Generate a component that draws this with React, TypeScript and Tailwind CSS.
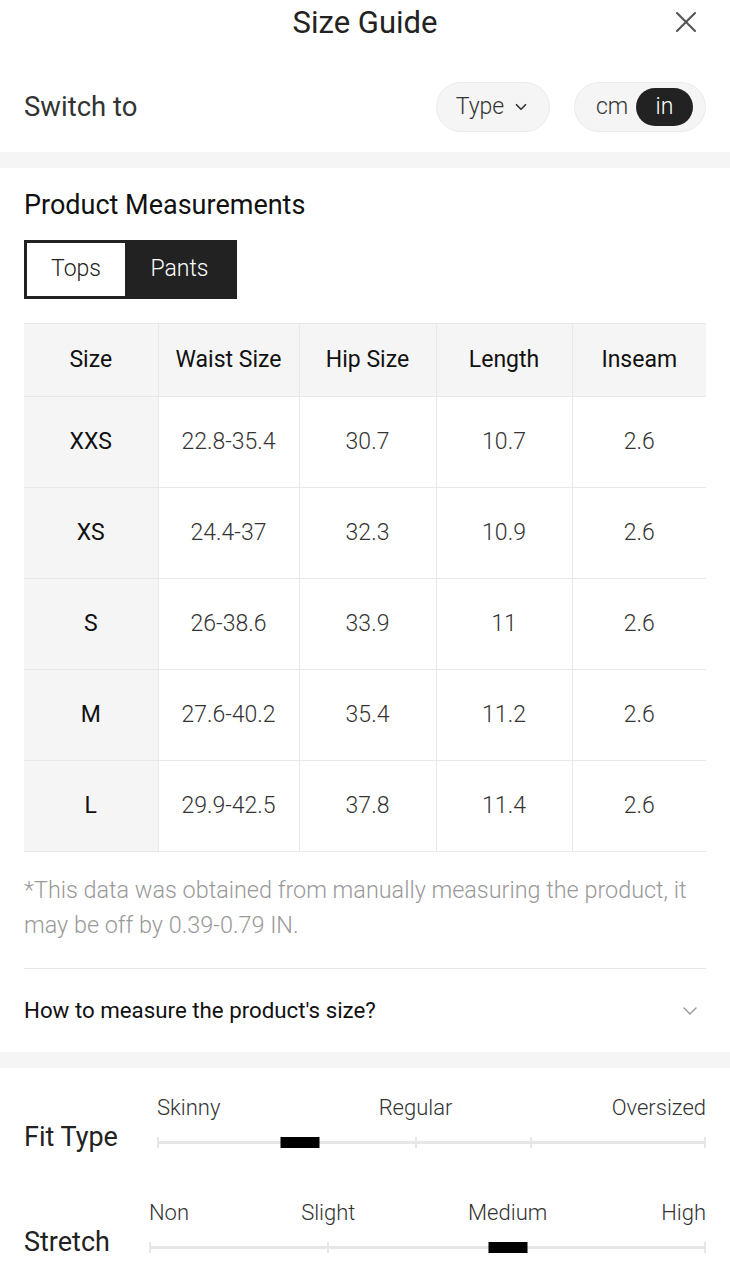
import { X, ChevronDown } from "lucide-react";

const rows = [
  ["XXS", "22.8-35.4", "30.7", "10.7", "2.6"],
  ["XS", "24.4-37", "32.3", "10.9", "2.6"],
  ["S", "26-38.6", "33.9", "11", "2.6"],
  ["M", "27.6-40.2", "35.4", "11.2", "2.6"],
  ["L", "29.9-42.5", "37.8", "11.4", "2.6"],
];

const headers = ["Size", "Waist Size", "Hip Size", "Length", "Inseam"];
const colWidths = ["w-[134px]", "w-[141px]", "w-[137px]", "w-[136px]", "w-[134px]"];

interface ScaleLabel {
  text: string;
  pos: number;
  align: "left" | "center" | "right";
}

interface ScaleProps {
  title: string;
  labels: ScaleLabel[];
  ticks: number[];
  thumb: number;
}

function Scale({ title, labels, ticks, thumb }: ScaleProps) {
  return (
    <div className="flex items-end gap-[39px]">
      <div className="text-[27px] leading-[27px] text-[#222] mb-[3px]">{title}</div>
      <div className="relative flex-1 h-[60px]">
        {/* labels */}
        {labels.map((l) => (
          <span
            key={l.text}
            className={
              "absolute top-0 text-[22px] leading-[28px] font-light text-[#333] whitespace-nowrap " +
              (l.align === "left" ? "" : l.align === "center" ? "-translate-x-1/2" : "-translate-x-full")
            }
            style={{ left: `${l.pos}%` }}
          >
            {l.text}
          </span>
        ))}
        {/* track */}
        <div className="absolute left-0 right-0 top-[47px] h-[3px] bg-[#e6e6e6]" />
        {ticks.map((t) => (
          <div
            key={t}
            className="absolute top-[43px] h-[11px] w-[2px] bg-[#e6e6e6] -translate-x-1/2"
            style={{ left: `${t}%` }}
          />
        ))}
        <div
          className="absolute top-[43px] h-[11px] w-[39px] bg-black -translate-x-1/2"
          style={{ left: `${thumb}%` }}
        />
      </div>
    </div>
  );
}

export default function App() {
  return (
    <div className="w-[730px] h-[1280px] bg-white overflow-hidden font-['Roboto',sans-serif] text-[#222]">
      {/* Header */}
      <div className="grid grid-cols-[1fr_auto_1fr] items-center h-[44px]">
        <div />
        <h1 className="text-[31px] leading-none text-[#222]">Size Guide</h1>
        <div className="flex justify-end pr-[26px]">
          <X className="w-[36px] h-[36px] text-[#555]" strokeWidth={1.4} />
        </div>
      </div>

      {/* Switch row */}
      <div className="flex items-center justify-between px-6 pt-[38px] pb-[20px]">
        <span className="text-[27.5px] leading-none text-[#333]">Switch to</span>
        <div className="flex items-center gap-6">
          <div className="flex items-center justify-center gap-[8px] w-[114px] h-[50px] rounded-full bg-[#f5f5f5] border border-[#ebebeb] text-[23px] font-light text-[#333]">
            <span>Type</span>
            <ChevronDown className="w-[18px] h-[18px] text-[#333]" strokeWidth={2.2} />
          </div>
          <div className="flex items-center w-[132px] h-[50px] rounded-full bg-[#f5f5f5] border border-[#ebebeb] pl-[21px] pr-[12px]">
            <span className="text-[23px] font-light text-[#333]">cm</span>
            <span className="ml-auto flex items-center justify-center w-[57px] h-[38px] rounded-full bg-[#222] text-white text-[23px] font-light">
              in
            </span>
          </div>
        </div>
      </div>

      <div className="h-[16px] bg-[#f5f5f5]" />

      {/* Product Measurements */}
      <div className="px-6 pt-[21px]">
        <h2 className="text-[27px] leading-[32px] text-[#111]">Product Measurements</h2>

        <div className="mt-[19px] inline-flex h-[59px] border-[3px] border-[#222]">
          <div className="w-[98px] flex items-center justify-center bg-white text-[23px] font-light text-[#222]">
            Tops
          </div>
          <div className="w-[109px] flex items-center justify-center bg-[#222] text-[23px] font-light text-white">
            Pants
          </div>
        </div>

        <table className="mt-[24px] w-full border-collapse table-fixed">
          <thead>
            <tr className="h-[73px] bg-[#f5f5f5]">
              {headers.map((h, i) => (
                <th
                  key={h}
                  className={
                    colWidths[i] +
                    " border-t border-b border-[#e8e8e8] text-[23px] font-normal text-[#111] text-center" +
                    (i > 0 ? " border-l" : "")
                  }
                >
                  {h}
                </th>
              ))}
            </tr>
          </thead>
          <tbody>
            {rows.map((r) => (
              <tr key={r[0]} className="h-[91px]">
                {r.map((c, i) => (
                  <td
                    key={i}
                    className={
                      "border-b border-[#e8e8e8] text-center text-[23px] " +
                      (i === 0
                        ? "bg-[#f5f5f5] text-[#111] font-normal"
                        : "border-l font-light text-[#333]")
                    }
                  >
                    {c}
                  </td>
                ))}
              </tr>
            ))}
          </tbody>
        </table>

        <p className="mt-[21px] text-[23.4px] leading-[35px] font-light text-[#999]">
          *This data was obtained from manually measuring the product, it may be off by 0.39-0.79 IN.
        </p>

        <div className="mt-[25px] border-t border-[#e6e6e6] h-[84px] flex items-center justify-between">
          <span className="text-[22.3px] text-[#111]">How to measure the product's size?</span>
          <ChevronDown className="w-[24px] h-[24px] text-[#999] mr-[4px]" strokeWidth={1.4} />
        </div>
      </div>

      <div className="h-[16px] bg-[#f5f5f5]" />

      {/* Fit / Stretch */}
      <div className="px-6 pt-[26px] flex flex-col gap-[45px] pb-[30px] border-b border-[#eee]">
        <Scale
          title="Fit Type"
          labels={[
            { text: "Skinny", pos: 0, align: "left" },
            { text: "Regular", pos: 47.1, align: "center" },
            { text: "Oversized", pos: 100, align: "right" },
          ]}
          ticks={[0.2, 47.1, 68.2, 99.8]}
          thumb={26}
        />
        <Scale
          title="Stretch"
          labels={[
            { text: "Non", pos: 0, align: "left" },
            { text: "Slight", pos: 32.2, align: "center" },
            { text: "Medium", pos: 64.4, align: "center" },
            { text: "High", pos: 100, align: "right" },
          ]}
          ticks={[0.2, 32.2, 64.4, 99.8]}
          thumb={64.4}
        />
      </div>
    </div>
  );
}
